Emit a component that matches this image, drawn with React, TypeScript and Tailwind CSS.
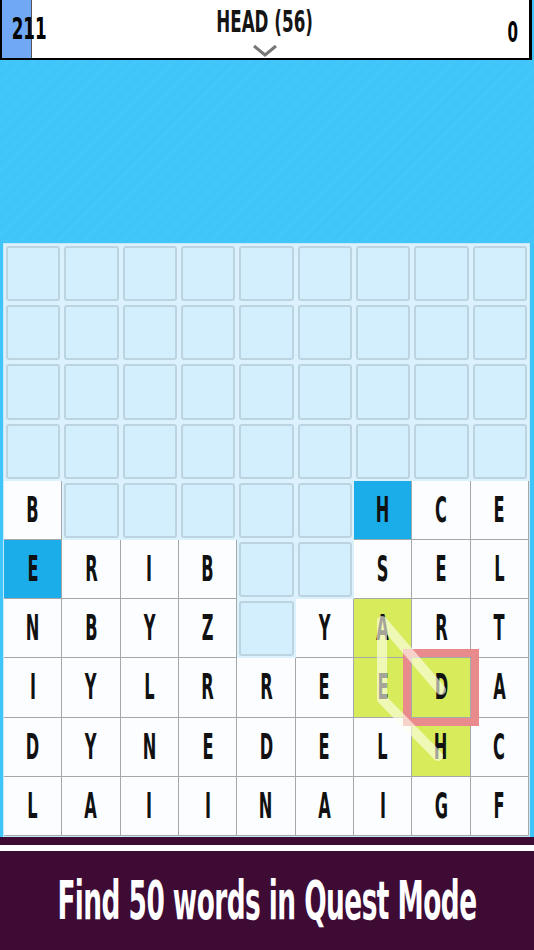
import React from 'react'

const ROWS = [
  '.........',
  '.........',
  '.........',
  '.........',
  'B.....HCE',
  'ERIB..SEL',
  'NBYZ.YART',
  'IYLRREEDA',
  'DYNEDELHC',
  'LAIINAIGF',
]

const BLUE = ['4-6', '5-0']
const GREEN = ['6-6', '7-6', '7-7', '8-7']

const condensed = "font-['DejaVu_Sans_Condensed','DejaVu_Sans',sans-serif]"

function Cell({ ch, r, c }: { ch: string; r: number; c: number }) {
  if (ch === '.') {
    return (
      <div className="p-[2px]">
        <div className="h-full rounded-[3px] border-2 border-[#bcd4e0] bg-[#d3eefc]" />
      </div>
    )
  }
  const key = `${r}-${c}`
  const bg = BLUE.includes(key)
    ? 'bg-[#1badea]'
    : GREEN.includes(key)
      ? 'bg-[#d8ec5b]'
      : 'bg-[#fbfdfe]'
  return (
    <div
      className={`relative flex items-center justify-center border-r border-b border-[#a4a8ab] ${bg}`}
    >
      <span
        className={`inline-block scale-x-[0.5] text-[36px] leading-none font-bold text-[#111] ${condensed}`}
      >
        {ch}
      </span>
      {key === '7-7' && (
        <div className="absolute -inset-[9px] z-10 border-[8px] border-[#e98a8c]" />
      )}
    </div>
  )
}

export default function App() {
  return (
    <div className="w-[534px] h-[950px] overflow-hidden bg-[#3fc5f9] flex flex-col">
      {/* Верхняя панель */}
      <div className="relative h-[60px] shrink-0 bg-white border-b-2 border-black border-l-2 border-r-[3px] mr-[2px] grid grid-cols-[1fr_auto_1fr] items-center">
        <div className="absolute inset-y-0 left-0 w-[30px] bg-[#70a8f6] border-r border-[#555]" />
        <div className="relative flex items-center">
          <span
            className={`ml-[-1px] inline-block scale-x-[0.62] text-[30px] leading-none font-bold text-black ${condensed}`}
          >
            211
          </span>
        </div>
        <div className="flex flex-col items-center self-start pt-[4px] ml-[-2px]">
          <span
            className={`inline-block scale-x-[0.6] text-[31px] leading-[34px] font-bold text-[#151515] whitespace-nowrap ${condensed}`}
          >
            HEAD (56)
          </span>
          <svg width="26" height="13" viewBox="0 0 26 13" className="mt-[6px]">
            <path d="M2 2 L13 11 L24 2" fill="none" stroke="#777" strokeWidth="3" />
          </svg>
        </div>
        <div className="flex justify-end">
          <span
            className={`mr-[7px] mt-[8px] inline-block scale-x-[0.6] text-[28px] leading-none font-bold text-black ${condensed}`}
          >
            0
          </span>
        </div>
      </div>

      {/* Полосатая область */}
      <div className="h-[183px] shrink-0 bg-[repeating-linear-gradient(135deg,#3fc5f9_0px,#3fc5f9_5px,#43c7fa_5px,#43c7fa_9px)]" />

      {/* Сетка букв */}
      <div className="ml-[3px] w-[527px] border border-[#c2e8f9] bg-[#dbf1fd] shrink-0">
        <div className="relative grid grid-cols-9 grid-rows-10 h-[592px]">
          {ROWS.map((row, r) =>
            row.split('').map((ch, c) => <Cell key={`${r}-${c}`} ch={ch} r={r} c={c} />)
          )}
          <svg
            className="absolute inset-0 z-20 pointer-events-none"
            width="525"
            height="592"
            viewBox="0 0 525 592"
          >
            <path
              d="M434 512 L378 455 L378 377 L437 446"
              fill="none"
              stroke="rgba(255,255,238,0.62)"
              strokeWidth="10"
              strokeLinecap="round"
              strokeLinejoin="round"
            />
          </svg>
        </div>
      </div>

      {/* Баннер */}
      <div className="flex-1 flex flex-col bg-[#3e0b35]">
        <div className="h-[8px]" />
        <div className="h-[6px] bg-white" />
        <div className="flex-1 flex items-center justify-center">
          <span
            className={`inline-block scale-x-[0.543] text-[54px] leading-none font-bold text-white whitespace-nowrap tracking-[-1px] ${condensed}`}
          >
            Find 50 words in Quest Mode
          </span>
        </div>
      </div>
    </div>
  )
}
